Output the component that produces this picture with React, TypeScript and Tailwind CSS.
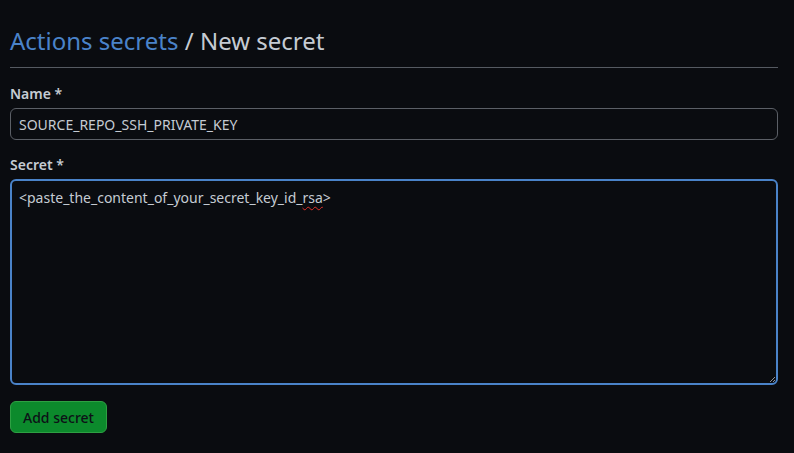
import React from "react";

const font = { fontFamily: '"Noto Sans", "Open Sans", sans-serif' };

export default function App() {
  return (
    <div
      className="min-h-[453px] w-full bg-[#0a0c10] pl-[10px] pr-[16px] pt-[24px] text-[#c9d1d9]"
      style={font}
    >
      <h1 className="border-b border-[#555a61] pb-[10px] text-[24px] leading-[33px] font-normal">
        <a href="#" className="text-[#4a83c9]">
          Actions secrets
        </a>
        <span className="text-[#c5cbd3]"> / New secret</span>
      </h1>

      <label className="mt-[16px] block text-[14px] leading-[20px] font-semibold text-[#c5cbd3]">
        Name *
      </label>
      <div className="mt-[4px] flex h-[32px] items-center rounded-[6px] border border-[#5b5f66] px-[8px] text-[14px] text-[#c5cbd3]">
        SOURCE_REPO_SSH_PRIVATE_KEY
      </div>

      <label className="mt-[15px] block text-[14px] leading-[20px] font-semibold text-[#c5cbd3]">
        Secret *
      </label>
      <div className="relative mt-[4px] h-[206px] rounded-[6px] border-2 border-[#4a83c9] px-[7px] pt-[7px] text-[14px] leading-[20px] text-[#c5cbd3]">
        &lt;paste_the_content_of_your_secret_key_id_
        <span className="underline decoration-wavy decoration-[#e0302a] decoration-[1px] underline-offset-[3px]">
          rsa
        </span>
        &gt;
        <svg
          className="absolute right-[1px] bottom-[1px]"
          width="6"
          height="6"
          viewBox="0 0 6 6"
        >
          <path d="M1 6 L6 1 M4 6 L6 4" stroke="#8b9099" strokeWidth="1" />
        </svg>
      </div>

      <button className="mt-[16px] h-[32px] rounded-[6px] border border-[#2ea043] bg-[#0c8a2c] px-[12px] text-[14px] font-medium text-[#0d1117]">
        Add secret
      </button>
    </div>
  );
}
